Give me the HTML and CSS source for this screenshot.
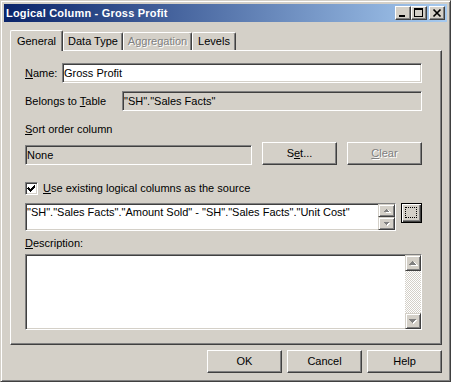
FILE: index.html
```html
<!DOCTYPE html>
<html>
<head>
<meta charset="utf-8">
<title>Logical Column - Gross Profit</title>
<link rel="stylesheet" href="styles.css">
</head>
<body>
<div class="window">
  <div class="titlebar">
    <span class="title">Logical Column - Gross Profit</span>
    <div class="caption-btns">
      <span class="cbtn"><svg width="14" height="12" viewBox="0 0 14 12" shape-rendering="crispEdges"><rect x="3" y="8" width="6" height="2" fill="#000"/></svg></span>
      <span class="cbtn"><svg width="14" height="12" viewBox="0 0 14 12" shape-rendering="crispEdges"><rect x="2" y="1" width="9" height="2" fill="#000"/><rect x="2" y="1" width="1" height="9" fill="#000"/><rect x="10" y="1" width="1" height="9" fill="#000"/><rect x="2" y="9" width="9" height="1" fill="#000"/></svg></span>
      <span class="cbtn close"><svg width="14" height="12" viewBox="0 0 14 12"><path d="M3.5 2.5 L10.5 9.5 M10.5 2.5 L3.5 9.5" stroke="#000" stroke-width="1.7" fill="none"/></svg></span>
    </div>
  </div>
  <div class="client">
    <div class="tabs">
      <div class="tab active w-general">General</div>
      <div class="tab w-datatype">Data Type</div>
      <div class="tab disabled w-agg">Aggregation</div>
      <div class="tab w-levels">Levels</div>
    </div>
    <div class="panel">
      <div class="row row-name">
        <span class="label lbl-name"><u>N</u>ame:</span>
        <div class="field w-name">Gross Profit</div>
      </div>
      <div class="row row-belongs">
        <span class="label lbl-belongs">Belongs to <u>T</u>able</span>
        <div class="field disabled w-belongs">"SH"."Sales Facts"</div>
      </div>
      <div class="label row-sortlabel"><u>S</u>ort order column</div>
      <div class="row row-sort">
        <div class="field disabled w-none">None</div>
        <div class="btn btn-set">S<u>e</u>t...</div>
        <div class="btn btn-clear disabled"><u>C</u>lear</div>
      </div>
      <div class="row row-check">
        <span class="check"><svg width="11" height="11" viewBox="0 0 11 11" shape-rendering="crispEdges"><path d="M2 4h1v1h1v1h1v-1h1v-1h1v-1h1v-1h1v3h-1v1h-1v1h-1v1h-1v1h-1v-1h-1v-1h-1v-1h-1z" fill="#000"/></svg></span>
        <span class="check-label"><u>U</u>se existing logical columns as the source</span>
      </div>
      <div class="row row-expr">
        <div class="field expr">
          <span class="expr-text">"SH"."Sales Facts"."Amount Sold" - "SH"."Sales Facts"."Unit Cost"</span>
          <div class="spinner">
            <span class="sbtn"><svg width="15" height="11" viewBox="0 0 15 11" shape-rendering="crispEdges"><path d="M6 7h5l-2.5-3z" fill="#fff" transform="translate(1,1)"/><path d="M5 7h5l-2.5-3z" fill="#808080"/></svg></span>
            <span class="sbtn"><svg width="15" height="11" viewBox="0 0 15 11" shape-rendering="crispEdges"><path d="M5 4h5l-2.5 3z" fill="#fff" transform="translate(1,1)"/><path d="M5 4h5l-2.5 3z" fill="#808080"/></svg></span>
          </div>
        </div>
        <div class="btn-ellipsis"><span class="focus-rect"></span></div>
      </div>
      <div class="label row-desclabel"><u>D</u>escription:</div>
      <div class="field textarea">
        <div class="textarea-body"></div>
        <div class="scrollbar">
          <span class="scbtn"><svg width="14" height="14" viewBox="0 0 14 14" shape-rendering="crispEdges"><path d="M4 9h7l-3.5-4z" fill="#fff" transform="translate(1,1)"/><path d="M3 9h7l-3.5-4z" fill="#808080"/></svg></span>
          <span class="track"></span>
          <span class="scbtn"><svg width="14" height="14" viewBox="0 0 14 14" shape-rendering="crispEdges"><path d="M3 5h7l-3.5 4z" fill="#fff" transform="translate(1,1)"/><path d="M3 5h7l-3.5 4z" fill="#808080"/></svg></span>
        </div>
      </div>
    </div>
    <div class="buttons">
      <div class="btn">OK</div>
      <div class="btn">Cancel</div>
      <div class="btn">Help</div>
    </div>
  </div>
</div>
</body>
</html>
```
FILE: styles.css
```css
* { box-sizing: border-box; }
html, body { margin: 0; padding: 0; background: #d4d0c8; }
body {
  font-family: "Liberation Sans", Arial, sans-serif;
  font-size: 11px;
  color: #000;
}
u { text-decoration: underline; text-underline-offset: 1px; }

.window {
  width: 451px;
  height: 382px;
  border: 1px solid;
  border-color: #d4d0c8 #404040 #404040 #d4d0c8;
  box-shadow: inset 1px 1px #fff, inset -1px -1px #808080;
  padding: 3px;
  display: flex;
  flex-direction: column;
}

.titlebar {
  height: 18px;
  flex: none;
  display: flex;
  align-items: center;
  background: linear-gradient(to right, #0a246a, #a6caf0);
}
.title {
  color: #fff;
  font-weight: bold;
  padding-left: 2px;
  letter-spacing: 0.2px;
  line-height: 18px;
}
.caption-btns { margin-left: auto; margin-right: 2px; display: flex; }
.cbtn {
  width: 16px;
  height: 14px;
  background: #d4d0c8;
  border: 1px solid;
  border-color: #fff #404040 #404040 #fff;
  box-shadow: inset -1px -1px #808080;
  display: block;
}
.cbtn svg { display: block; }
.cbtn.close { margin-left: 2px; }

.client {
  flex: 1;
  display: flex;
  flex-direction: column;
  padding: 0 5px 0 6px;
}

.tabs {
  display: flex;
  margin-top: 8px;
  height: 20px;
  align-items: flex-start;
  position: relative;
  z-index: 1;
  flex: none;
}
.tab {
  height: 18px;
  margin-top: 2px;
  border-top: 1px solid #fff;
  border-left: 1px solid #fff;
  border-right: 1px solid #404040;
  box-shadow: inset -1px 0 #808080;
  border-radius: 2px 2px 0 0;
  text-align: center;
  line-height: 13px;
  padding-top: 2px;
  background: #d4d0c8;
  white-space: nowrap;
}
.tab.active {
  height: 21px;
  margin-top: 0;
  padding-top: 4px;
}
.tab.disabled { color: #808080; text-shadow: 1px 1px #fff; }
.w-general { width: 53px; }
.w-datatype { width: 60px; }
.w-agg { width: 69px; }
.w-levels { width: 44px; }

.panel {
  height: 295px;
  flex: none;
  border: 1px solid;
  border-color: #fff #404040 #404040 #fff;
  box-shadow: inset -1px -1px #808080;
  padding: 12px 0 0 14px;
  display: flex;
  flex-direction: column;
}

.row { display: flex; flex: none; }
.label { line-height: 13px; white-space: nowrap; }

.row-name { height: 20px; align-items: center; }
.lbl-name { width: 37px; }
.w-name { width: 360px; }

.row-belongs { margin-top: 8px; height: 20px; align-items: center; }
.lbl-belongs { width: 97px; }
.w-belongs { width: 300px; }

.row-sortlabel { margin-top: 12px; height: 13px; flex: none; }

.row-sort { margin-top: 7px; height: 22px; align-items: flex-end; }
.w-none { width: 227px; }
.btn-set { margin-left: 10px; height: 22px; }
.btn-clear { margin-left: 10px; height: 22px; }

.row-check { margin-top: 17px; height: 13px; align-items: center; }
.check {
  width: 13px;
  height: 13px;
  border: 1px solid;
  border-color: #808080 #fff #fff #808080;
  box-shadow: inset 1px 1px #404040, inset -1px -1px #d4d0c8;
  background: #fff;
  display: block;
}
.check svg { display: block; }
.check-label { margin-left: 5px; line-height: 13px; white-space: nowrap; }

.field {
  height: 20px;
  border: 1px solid;
  border-color: #808080 #fff #fff #808080;
  box-shadow: inset 1px 1px #404040, inset -1px -1px #d4d0c8;
  background: #fff;
  padding: 0 0 0 1px;
  line-height: 18px;
  white-space: nowrap;
  overflow: hidden;
}
.field.disabled { background: #d4d0c8; }

.row-expr { margin-top: 8px; align-items: flex-start; }
.expr {
  width: 371px;
  height: 28px;
  display: flex;
  padding: 0;
}
.expr-text { flex: 1; padding: 2px 0 0 1px; line-height: 13px; }
.spinner { width: 17px; display: flex; flex-direction: column; flex: none; }
.sbtn {
  height: 13px;
  background: #d4d0c8;
  border: 1px solid;
  border-color: #d4d0c8 #404040 #404040 #d4d0c8;
  box-shadow: inset 1px 1px #fff, inset -1px -1px #808080;
  display: block;
}
.sbtn svg { display: block; }

.btn-ellipsis {
  margin-left: 5px;
  width: 21px;
  height: 20px;
  border: 1px solid #000;
  background: #d4d0c8;
  box-shadow: inset 1px 1px #fff, inset -1px -1px #404040, inset -2px -2px #808080;
  display: flex;
  padding: 3px 4px 4px 3px;
}
.focus-rect { flex: 1; border: 1px dotted #000; }

.row-desclabel { margin-top: 6px; height: 13px; flex: none; }

.textarea {
  margin-top: 4px;
  width: 397px;
  height: 76px;
  display: flex;
  padding: 0;
  flex: none;
  background: #fff;
}
.textarea-body { flex: 1; }
.scrollbar { width: 16px; display: flex; flex-direction: column; }
.scbtn {
  height: 16px;
  flex: none;
  background: #d4d0c8;
  border: 1px solid;
  border-color: #d4d0c8 #404040 #404040 #d4d0c8;
  box-shadow: inset 1px 1px #fff, inset -1px -1px #808080;
  display: block;
}
.scbtn svg { display: block; }
.track {
  flex: 1;
  background: repeating-conic-gradient(#fff 0 25%, #d4d0c8 0 50%) 0 0 / 2px 2px;
}

.btn {
  width: 75px;
  height: 23px;
  background: #d4d0c8;
  border: 1px solid;
  border-color: #fff #404040 #404040 #fff;
  box-shadow: inset -1px -1px #808080;
  display: flex;
  align-items: center;
  justify-content: center;
  line-height: 13px;
  flex: none;
}
.btn.disabled { color: #808080; text-shadow: 1px 1px #fff; }

.buttons {
  margin-top: 5px;
  display: flex;
  justify-content: flex-end;
  gap: 5px;
  flex: none;
}
```
